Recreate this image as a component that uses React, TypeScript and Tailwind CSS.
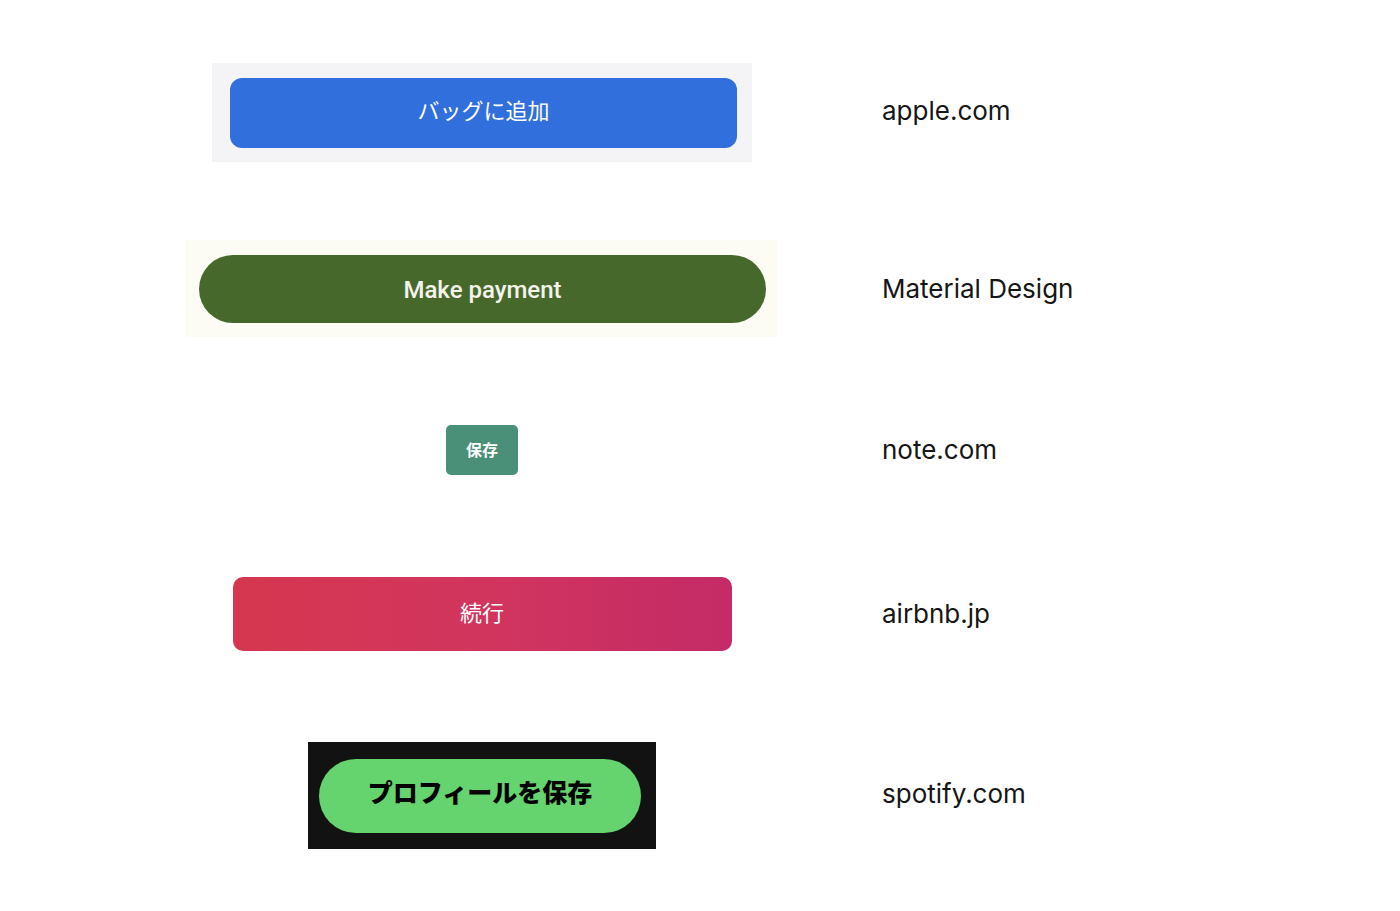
import React from "react";

const jp = { fontFamily: '"Noto Sans CJK JP", "Noto Sans", sans-serif' };

function Label({ children, cls = "" }: { children: React.ReactNode; cls?: string }) {
  return (
    <div
      className={"ml-[100px] text-[26px] leading-none text-[#161616] " + cls}
      style={{ fontFamily: 'Inter, "Noto Sans", sans-serif' }}
    >
      {children}
    </div>
  );
}

export default function App() {
  return (
    <div className="w-[1400px] h-[911px] bg-white flex flex-col pl-[182px]">
      {/* apple */}
      <div className="mt-[63px] h-[99px] flex items-center">
        <div className="w-[600px] flex justify-center">
          <div className="w-[540px] h-[99px] bg-[#f4f4f6] flex items-center pl-[18px]">
            <button
              className="w-[507px] h-[70px] rounded-[12px] bg-[#306fdc] text-white text-[22px] font-normal flex items-center justify-center pb-[7px]"
              style={jp}
            >
              バッグに追加
            </button>
          </div>
        </div>
        <Label cls="mb-[3px]">apple.com</Label>
      </div>

      {/* material */}
      <div className="mt-[78px] h-[97px] flex items-center">
        <div className="w-[600px] flex justify-center">
          <div className="w-[592px] h-[97px] bg-[#fcfcf5] flex items-center pl-[13px]">
            <button
              className="w-[567px] h-[68px] rounded-full bg-[#46692b] text-[#f3f3ec] text-[24px] font-medium flex items-center justify-center pt-[3px]"
              style={{ fontFamily: 'Roboto, "Noto Sans", sans-serif' }}
            >
              Make payment
            </button>
          </div>
        </div>
        <Label>Material Design</Label>
      </div>

      {/* note */}
      <div className="mt-[88px] h-[50px] flex items-center">
        <div className="w-[600px] flex justify-center">
          <button
            className="w-[72px] h-[50px] rounded-[5px] bg-[#4a8f78] text-white text-[16px] font-bold flex items-center justify-center pb-[2px]"
            style={jp}
          >
            保存
          </button>
        </div>
        <Label>note.com</Label>
      </div>

      {/* airbnb */}
      <div className="mt-[102px] h-[74px] flex items-center">
        <div className="w-[600px] flex justify-center">
          <button
            className="w-[499px] h-[74px] rounded-[10px] bg-gradient-to-r from-[#d6374f] via-[#d1355e] to-[#c42a66] text-white text-[22px] font-normal flex items-center justify-center pb-[6px]"
            style={jp}
          >
            続行
          </button>
        </div>
        <Label>airbnb.jp</Label>
      </div>

      {/* spotify */}
      <div className="mt-[91px] h-[107px] flex items-center">
        <div className="w-[600px] flex justify-center">
          <div className="w-[348px] h-[107px] bg-[#121212] flex items-center pl-[11px]">
            <button
              className="w-[322px] h-[74px] rounded-full bg-[#65d46e] text-black text-[25px] font-black flex items-center justify-center pb-[7px]"
              style={jp}
            >
              プロフィールを保存
            </button>
          </div>
        </div>
        <Label cls="mb-[3px]">spotify.com</Label>
      </div>
    </div>
  );
}
